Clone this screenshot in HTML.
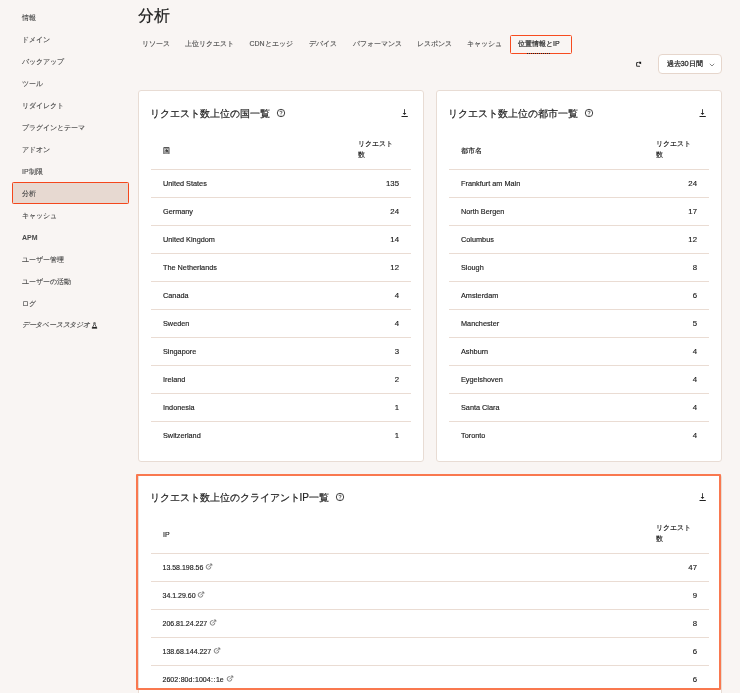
<!DOCTYPE html>
<html lang="ja">
<head>
<meta charset="utf-8">
<style>
*{box-sizing:border-box;margin:0;padding:0}
html,body{width:740px;height:693px;overflow:hidden}
body{background:#f9f5f3;font-family:"Liberation Sans",sans-serif;color:#222;position:relative}
.side .it{position:absolute;left:22px;font-size:7px;color:#4a4a4a;font-weight:normal;-webkit-text-stroke:0.12px #4a4a4a;line-height:10px;white-space:nowrap}
.side .db{letter-spacing:-0.2px}
.side .db span{display:inline-block;transform:skewX(-14deg);transform-origin:0 100%;margin-left:-1.5px;position:relative;top:-0.7px}
.side .sel{position:absolute;left:12px;top:182px;width:116.5px;height:21.5px;background:#e7d9d1;border-radius:1.5px}
.flask{position:absolute;left:69.3px;top:1.5px}
.title{position:absolute;left:138px;top:5px;font-size:16px;line-height:22px;color:#1e1e1e;-webkit-text-stroke:0.2px #1e1e1e}
.tab{position:absolute;top:39.4px;font-size:7px;line-height:10px;color:#555;white-space:nowrap;-webkit-text-stroke:0.15px #555}
.tab.act{color:#333;-webkit-text-stroke:0.22px #333}
.uline{position:absolute;left:527px;top:53px;width:23px;height:1px;background:repeating-linear-gradient(90deg,#222 0 1px,transparent 1px 2px);z-index:2}
.tabsel{position:absolute;left:510px;top:35px;width:62px;height:19.2px;border:1.5px solid #f74b1f;border-radius:1.5px}
.hl{position:absolute;left:136px;top:474px;width:585px;height:216px;border:2px solid #f9784f;border-radius:1px}
.side .sel::after{content:"";position:absolute;left:-0.5px;top:-0.5px;right:-0.5px;bottom:-0.5px;border:1.5px solid #f4471c;border-radius:1.5px}
.refresh{position:absolute;left:634px;top:60px}
.dd{position:absolute;left:658px;top:54px;width:64px;height:19.5px;background:#fff;border:1px solid #e6d6cc;border-radius:4px;font-size:7.4px;color:#333;-webkit-text-stroke:0.3px #333}
.dd span{position:absolute;left:7.5px;top:3.8px;line-height:10px;white-space:nowrap}
.dd svg{position:absolute;left:50px;top:8px}
.card{position:absolute;background:#fff;border:1px solid #e8dcd4;border-radius:3px}
.ctitle{position:absolute;left:10.5px;top:16px;font-size:10px;line-height:14px;color:#222;-webkit-text-stroke:0.2px #222;white-space:nowrap}
.ctitle .q{position:absolute;right:-16px;top:1.2px}
.dl{position:absolute;right:13px;top:17px}
.tbl{position:absolute;left:12px;right:12px;top:40px;font-size:7.3px;color:#1c1c1c;-webkit-text-stroke:0.15px #1c1c1c}
.hrow{position:relative;height:39px;border-bottom:1px solid #eadcd3}
.hrow .c1{position:absolute;left:12px;top:15px;line-height:10px;font-size:7px}
.hrow .c2{position:absolute;right:5px;top:8px;width:48px;line-height:10.7px;font-size:7px}
.row{position:relative;height:28px;border-bottom:1px solid #eadcd3}
.row.last{border-bottom:none}
.row .c1{position:absolute;left:12px;top:9px;line-height:10px;white-space:nowrap}
.row .n{position:absolute;right:12px;top:9px;line-height:10px;font-size:7.8px}
.ext{margin-left:1.8px;vertical-align:-1px}
.co{margin:0 0.35px}
.ipt .row .c1{font-size:7px;left:11.5px}

.side .apm{font-weight:bold;-webkit-text-stroke:0}
#wrap{position:absolute;left:0;top:0;width:740px;height:693px;will-change:transform}

</style>
</head>
<body>
<div id="wrap">
<div class="side">
<div class="it" style="top:12.5px">情報</div>
<div class="it" style="top:34.5px">ドメイン</div>
<div class="it" style="top:56.5px">バックアップ</div>
<div class="it" style="top:78.5px">ツール</div>
<div class="it" style="top:100.5px">リダイレクト</div>
<div class="it" style="top:122.5px">プラグインとテーマ</div>
<div class="it" style="top:144.5px">アドオン</div>
<div class="it" style="top:166.5px">IP制限</div>
<div class="sel"></div>
<div class="it" style="top:188.5px">分析</div>
<div class="it" style="top:210.5px">キャッシュ</div>
<div class="it apm" style="top:232.5px">APM</div>
<div class="it" style="top:254.5px">ユーザー管理</div>
<div class="it" style="top:276.5px">ユーザーの活動</div>
<div class="it" style="top:298.5px">ログ</div>
<div class="it db" style="top:320.5px"><span>データベーススタジオ</span><svg class="flask" width="7" height="7" viewBox="0 0 7 7"><path d="M2.6 0.8 H4.4 M2.9 0.8 V2.8 L1 6.2 H6 L4.1 2.8 V0.8" stroke="#333" stroke-width="0.8" fill="none"/><path d="M1.6 5 H5.4 L6 6.2 H1 Z" fill="#222"/></svg></div>
</div>
<div class="title">分析</div>
<div class="tab" style="left:142px">リソース</div>
<div class="tab" style="left:185px">上位リクエスト</div>
<div class="tab" style="left:249.5px">CDNとエッジ</div>
<div class="tab" style="left:309px">デバイス</div>
<div class="tab" style="left:352.5px">パフォーマンス</div>
<div class="tab" style="left:417px">レスポンス</div>
<div class="tab" style="left:467px">キャッシュ</div>
<div class="tab act" style="left:518px">位置情報とIP</div>
<div class="uline"></div><div class="tabsel"></div>
<svg class="refresh" width="8" height="8" viewBox="0 0 8 8"><path d="M4.6 2.5 H3.4 Q2.6 2.5 2.6 3.3 V5.5 Q2.6 6.3 3.4 6.3 H6" stroke="#333" stroke-width="1.05" fill="none"/><path d="M4.6 1.8 L7.1 1.8 L7.1 4.3 Z" fill="#111"/><circle cx="6.1" cy="2.9" r="0.9" fill="#111"/></svg>
<div class="dd"><span>過去30日間</span><svg width="6" height="4" viewBox="0 0 6 4"><path d="M0.8 0.8 L3 3 L5.2 0.8" stroke="#555" stroke-width="0.7" fill="none"/></svg></div>
<div class="card" style="left:138px;top:90px;width:286px;height:372px">
<div class="ctitle"><span>リクエスト数上位の国一覧</span><svg class="q" width="10" height="10" viewBox="0 0 10 10"><circle cx="5" cy="5" r="3.7" fill="none" stroke="#222" stroke-width="0.85"/><path d="M3.9 4.1 Q4 3.1 5 3.1 Q6.1 3.1 6.1 4.1 Q6.1 4.8 5 5.2 L5 5.8" fill="none" stroke="#444" stroke-width="0.85"/><circle cx="5" cy="6.9" r="0.5" fill="#444"/></svg></div>
<svg class="dl" width="9" height="10" viewBox="0 0 9 10"><path d="M3.5 1.2 V5.5" stroke="#444" stroke-width="1" fill="none"/><path d="M1.6 5 H5.4 L3.5 7 Z" fill="#222"/><path d="M0.5 8.5 H6.8" stroke="#222" stroke-width="1" fill="none"/></svg>
<div class="tbl">
<div class="hrow"><div class="c1">国</div><div class="c2">リクエスト<br>数</div></div>
<div class="row"><div class="c1">United States</div><div class="n">135</div></div>
<div class="row"><div class="c1">Germany</div><div class="n">24</div></div>
<div class="row"><div class="c1">United Kingdom</div><div class="n">14</div></div>
<div class="row"><div class="c1">The Netherlands</div><div class="n">12</div></div>
<div class="row"><div class="c1">Canada</div><div class="n">4</div></div>
<div class="row"><div class="c1">Sweden</div><div class="n">4</div></div>
<div class="row"><div class="c1">Singapore</div><div class="n">3</div></div>
<div class="row"><div class="c1">Ireland</div><div class="n">2</div></div>
<div class="row"><div class="c1">Indonesia</div><div class="n">1</div></div>
<div class="row last"><div class="c1">Switzerland</div><div class="n">1</div></div>
</div></div>
<div class="card" style="left:436px;top:90px;width:286px;height:372px">
<div class="ctitle"><span>リクエスト数上位の都市一覧</span><svg class="q" width="10" height="10" viewBox="0 0 10 10"><circle cx="5" cy="5" r="3.7" fill="none" stroke="#222" stroke-width="0.85"/><path d="M3.9 4.1 Q4 3.1 5 3.1 Q6.1 3.1 6.1 4.1 Q6.1 4.8 5 5.2 L5 5.8" fill="none" stroke="#444" stroke-width="0.85"/><circle cx="5" cy="6.9" r="0.5" fill="#444"/></svg></div>
<svg class="dl" width="9" height="10" viewBox="0 0 9 10"><path d="M3.5 1.2 V5.5" stroke="#444" stroke-width="1" fill="none"/><path d="M1.6 5 H5.4 L3.5 7 Z" fill="#222"/><path d="M0.5 8.5 H6.8" stroke="#222" stroke-width="1" fill="none"/></svg>
<div class="tbl">
<div class="hrow"><div class="c1">都市名</div><div class="c2">リクエスト<br>数</div></div>
<div class="row"><div class="c1">Frankfurt am Main</div><div class="n">24</div></div>
<div class="row"><div class="c1">North Bergen</div><div class="n">17</div></div>
<div class="row"><div class="c1">Columbus</div><div class="n">12</div></div>
<div class="row"><div class="c1">Slough</div><div class="n">8</div></div>
<div class="row"><div class="c1">Amsterdam</div><div class="n">6</div></div>
<div class="row"><div class="c1">Manchester</div><div class="n">5</div></div>
<div class="row"><div class="c1">Ashburn</div><div class="n">4</div></div>
<div class="row"><div class="c1">Eygelshoven</div><div class="n">4</div></div>
<div class="row"><div class="c1">Santa Clara</div><div class="n">4</div></div>
<div class="row last"><div class="c1">Toronto</div><div class="n">4</div></div>
</div></div>
<div class="card" style="left:138px;top:474px;width:584px;height:260px">
<div class="ctitle"><span>リクエスト数上位のクライアントIP一覧</span><svg class="q" width="10" height="10" viewBox="0 0 10 10"><circle cx="5" cy="5" r="3.7" fill="none" stroke="#222" stroke-width="0.85"/><path d="M3.9 4.1 Q4 3.1 5 3.1 Q6.1 3.1 6.1 4.1 Q6.1 4.8 5 5.2 L5 5.8" fill="none" stroke="#444" stroke-width="0.85"/><circle cx="5" cy="6.9" r="0.5" fill="#444"/></svg></div>
<svg class="dl" width="9" height="10" viewBox="0 0 9 10"><path d="M3.5 1.2 V5.5" stroke="#444" stroke-width="1" fill="none"/><path d="M1.6 5 H5.4 L3.5 7 Z" fill="#222"/><path d="M0.5 8.5 H6.8" stroke="#222" stroke-width="1" fill="none"/></svg>
<div class="tbl ipt">
<div class="hrow"><div class="c1">IP</div><div class="c2">リクエスト<br>数</div></div>
<div class="row"><div class="c1">13.58.198.56<svg class="ext" width="8" height="8" viewBox="0 0 8 8"><path d="M4.2 1.6 H3.4 A2.3 2.3 0 1 0 5.8 4 V3.6" stroke="#666" stroke-width="0.8" fill="none"/><path d="M3.4 4.3 L6.6 1.1 M4.9 1 H6.8 V2.9" stroke="#666" stroke-width="0.8" fill="none"/></svg></div><div class="n">47</div></div>
<div class="row"><div class="c1">34.1.29.60<svg class="ext" width="8" height="8" viewBox="0 0 8 8"><path d="M4.2 1.6 H3.4 A2.3 2.3 0 1 0 5.8 4 V3.6" stroke="#666" stroke-width="0.8" fill="none"/><path d="M3.4 4.3 L6.6 1.1 M4.9 1 H6.8 V2.9" stroke="#666" stroke-width="0.8" fill="none"/></svg></div><div class="n">9</div></div>
<div class="row"><div class="c1">206.81.24.227<svg class="ext" width="8" height="8" viewBox="0 0 8 8"><path d="M4.2 1.6 H3.4 A2.3 2.3 0 1 0 5.8 4 V3.6" stroke="#666" stroke-width="0.8" fill="none"/><path d="M3.4 4.3 L6.6 1.1 M4.9 1 H6.8 V2.9" stroke="#666" stroke-width="0.8" fill="none"/></svg></div><div class="n">8</div></div>
<div class="row"><div class="c1">138.68.144.227<svg class="ext" width="8" height="8" viewBox="0 0 8 8"><path d="M4.2 1.6 H3.4 A2.3 2.3 0 1 0 5.8 4 V3.6" stroke="#666" stroke-width="0.8" fill="none"/><path d="M3.4 4.3 L6.6 1.1 M4.9 1 H6.8 V2.9" stroke="#666" stroke-width="0.8" fill="none"/></svg></div><div class="n">6</div></div>
<div class="row"><div class="c1">2602<span class="co">:</span>80d<span class="co">:</span>1004<span class="co">:</span><span class="co">:</span>1e<svg class="ext" width="8" height="8" viewBox="0 0 8 8"><path d="M4.2 1.6 H3.4 A2.3 2.3 0 1 0 5.8 4 V3.6" stroke="#666" stroke-width="0.8" fill="none"/><path d="M3.4 4.3 L6.6 1.1 M4.9 1 H6.8 V2.9" stroke="#666" stroke-width="0.8" fill="none"/></svg></div><div class="n">6</div></div>
</div></div>
<div class="hl"></div></div>
</body>
</html>
